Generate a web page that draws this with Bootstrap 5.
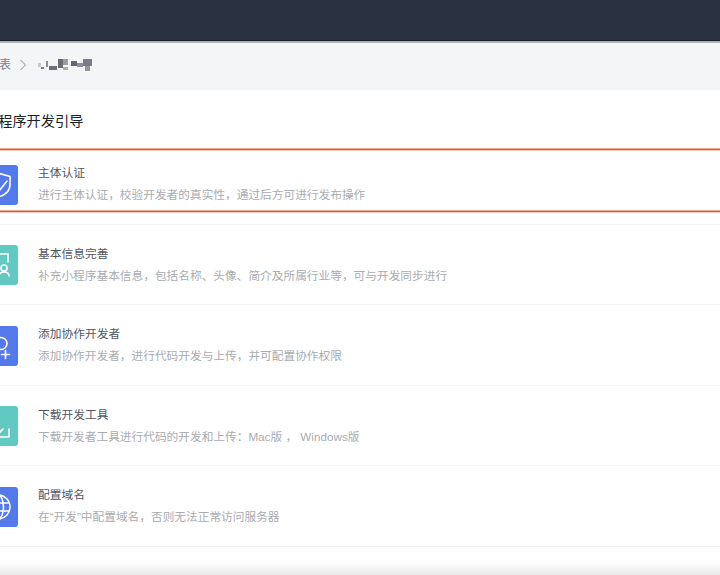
<!DOCTYPE html>
<html lang="zh">
<head>
    <title>小程序开发引导</title>
    <meta charset="UTF-8">
    <meta name="viewport" content="width=device-width, initial-scale=1">
    <link href="https://cdn.jsdelivr.net/npm/bootstrap@5.3.0/dist/css/bootstrap.min.css" rel="stylesheet">
    <script src="https://cdn.jsdelivr.net/npm/bootstrap@5.3.0/dist/js/bootstrap.bundle.min.js"></script>
    <style>
        html, body {
            height: 575px;
            overflow: hidden;
        }

        body {
            font-family: "Liberation Sans", "Noto Sans CJK SC", sans-serif;
            background: #fff;
            display: flex;
            flex-direction: column;
        }

        .top-bar {
            height: 43px;
            flex: none;
            background: #2a3241;
            border-bottom: 2px solid #aeb2b9;
            box-shadow: inset 0 -1px 0 #171c26;
        }

        .crumb-bar {
            height: 47px;
            flex: none;
            padding-bottom: 4px;
            background: #f4f5f7;
            font-size: 12px;
            color: #7c8087;
        }

        .crumb-first {
            margin-left: -1px;
        }

        .crumb-arrow {
            margin: 0 7px 0 8px;
        }

        .crumb-mask {
            margin-left: 3px;
        }

        .page-title {
            font-size: 14.2px;
            line-height: 20px;
            font-weight: 400;
            color: #1d2025;
            margin: 21px 0 0 -16px;
        }

        .guide-list {
            margin-top: 13px;
        }

        .guide-item {
            height: 80.5px;
            border-bottom: 1px solid #f1f2f3;
            padding-top: 20.5px;
        }

        .guide-icon {
            width: 40px;
            height: 40px;
            flex: none;
            margin-left: -22px;
            border-radius: 3px;
            color: #fff;
        }

        .icon-blue { background: #5379ea; }
        .icon-teal { background: #62c9c2; }

        .guide-text {
            margin: -0.5px 0 0 20px;
        }

        .guide-title {
            font-size: 11.75px;
            line-height: 17px;
            color: #52565d;
        }

        .guide-desc {
            font-size: 11.7px;
            line-height: 17px;
            margin-top: 5px;
            color: #a9acb0;
            white-space: nowrap;
        }

        .mark-line {
            left: 0;
            right: 0;
            height: 3px;
            background: #d9573a;
            border-top: 1px solid #f0a793;
            border-bottom: 1px solid #f6c9ba;
            background-clip: padding-box;
        }

        .mark-top { top: 148px; }
        .mark-bottom { top: 210px; }

        .page-foot {
            left: 0;
            right: 0;
            bottom: 0;
            height: 13px;
            background: linear-gradient(#fff, #e9e9e9);
        }
    </style>
</head>
<body class="position-relative">

<div class="top-bar"></div>

<div class="crumb-bar d-flex align-items-center">
    <span class="crumb-first">表</span>
    <svg class="crumb-arrow" width="8" height="12" viewBox="0 0 8 12" fill="none" stroke="#8a8e95" stroke-width="1">
        <path d="M1.500 1 6.500 6 1.500 11"/>
    </svg>
    <svg class="crumb-mask" width="58" height="14" viewBox="0 0 58 14">
        <defs>
            <filter id="mosaic" x="-10%" y="-20%" width="120%" height="140%"><feGaussianBlur stdDeviation="0.7"/></filter>
        </defs>
        <g filter="url(#mosaic)">
            <rect x="1" y="5" width="3" height="4" fill="#c9cad0"/>
            <rect x="4" y="9" width="3" height="2" fill="#77787f"/>
            <rect x="9" y="3" width="2" height="6" fill="#8f9097"/>
            <rect x="12" y="8" width="8" height="4" fill="#6e7079"/>
            <rect x="21" y="1" width="5" height="9" fill="#6a6a74"/>
            <rect x="26" y="1" width="5" height="6" fill="#9b99a3"/>
            <rect x="26" y="9" width="5" height="3" fill="#a9a9b0"/>
            <rect x="34" y="3" width="6" height="5" fill="#64667a"/>
            <rect x="40" y="5" width="6" height="4" fill="#8d8e9c"/>
            <rect x="46" y="1" width="9" height="7" fill="#7b7b88"/>
            <rect x="48" y="8" width="5" height="5" fill="#94949f"/>
        </g>
    </svg>
</div>

<h1 class="page-title">小程序开发引导</h1>

<div class="guide-list">
    <div class="guide-item d-flex">
        <div class="guide-icon icon-blue d-flex align-items-center justify-content-center">
            <svg width="28" height="28" viewBox="0 0 28 28" fill="none" stroke="currentColor" stroke-width="1.600" stroke-linejoin="round" stroke-linecap="round">
                <path d="M14 2 26 5.500V14c0 6-5 10.500-12 12C7 24.500 2 20 2 14V5.500z"/>
                <path d="M23 10 15 20"/>
            </svg>
        </div>
        <div class="guide-text">
            <div class="guide-title">主体认证</div>
            <div class="guide-desc">进行主体认证，校验开发者的真实性，通过后方可进行发布操作</div>
        </div>
    </div>
    <div class="guide-item d-flex">
        <div class="guide-icon icon-teal d-flex align-items-center justify-content-center">
            <svg width="28" height="28" viewBox="0 0 28 28" fill="none" stroke="currentColor" stroke-width="1.600" stroke-linecap="round">
                <path d="M3 26V3h21v8"/>
                <circle cx="20" cy="17" r="3"/>
                <path d="M15 25c0-3 2-4 5-4s5 1 5 4"/>
            </svg>
        </div>
        <div class="guide-text">
            <div class="guide-title">基本信息完善</div>
            <div class="guide-desc">补充小程序基本信息，包括名称、头像、简介及所属行业等，可与开发同步进行</div>
        </div>
    </div>
    <div class="guide-item d-flex">
        <div class="guide-icon icon-blue d-flex align-items-center justify-content-center">
            <svg width="28" height="28" viewBox="0 0 28 28" fill="none" stroke="currentColor" stroke-width="1.600" stroke-linecap="round">
                <circle cx="17" cy="11.500" r="6"/>
                <path d="M4 27c0-4 4-7 9-8.500"/>
                <path d="M21.500 18.500v8M17.500 22.500h8"/>
            </svg>
        </div>
        <div class="guide-text">
            <div class="guide-title">添加协作开发者</div>
            <div class="guide-desc">添加协作开发者，进行代码开发与上传，并可配置协作权限</div>
        </div>
    </div>
    <div class="guide-item d-flex">
        <div class="guide-icon icon-teal d-flex align-items-center justify-content-center">
            <svg width="28" height="28" viewBox="0 0 28 28" fill="none" stroke="currentColor" stroke-width="1.600" stroke-linecap="round" stroke-linejoin="round">
                <path d="M3 16v9h22v-8"/>
                <path d="M19 17 15 21l-4-3"/>
            </svg>
        </div>
        <div class="guide-text">
            <div class="guide-title">下载开发工具</div>
            <div class="guide-desc">下载开发者工具进行代码的开发和上传：Mac版 ， Windows版</div>
        </div>
    </div>
    <div class="guide-item d-flex">
        <div class="guide-icon icon-blue d-flex align-items-center justify-content-center">
            <svg width="28" height="28" viewBox="0 0 28 28" fill="none" stroke="currentColor" stroke-width="1.600">
                <circle cx="14" cy="14" r="12"/>
                <ellipse cx="14" cy="14" rx="5.500" ry="12"/>
                <path d="M3 10h22M3 18h22"/>
            </svg>
        </div>
        <div class="guide-text">
            <div class="guide-title">配置域名</div>
            <div class="guide-desc">在“开发”中配置域名，否则无法正常访问服务器</div>
        </div>
    </div>
</div>

<div class="mark-line mark-top position-absolute"></div>
<div class="mark-line mark-bottom position-absolute"></div>
<div class="page-foot position-absolute"></div>

</body>
</html>
